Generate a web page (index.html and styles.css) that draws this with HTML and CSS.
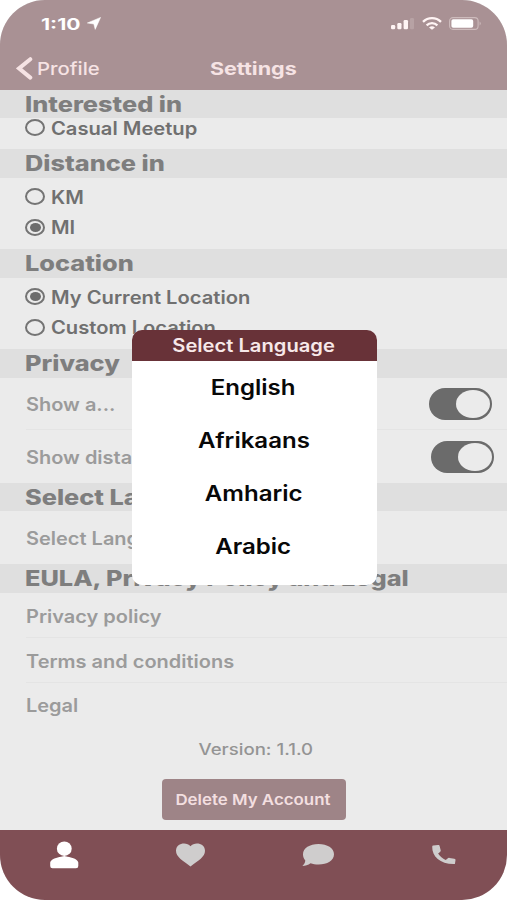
FILE: index.html
```html
<!DOCTYPE html>
<html lang="en">
<head>
<meta charset="utf-8">
<title>Settings</title>
<link rel="stylesheet" href="styles.css">
</head>
<body>
<div class="phone">
  <header class="top">
    <div class="status">
      <span class="t time">1:10</span>
      <svg class="nav-arrow" width="14" height="13" viewBox="0 0 14 13"><path d="M13.600 .4 8.200 12.400 6.800 7 .3 6z" fill="#fff" stroke="#fff" stroke-width=".5" stroke-linejoin="round"/></svg>
      <svg class="signal" width="24" height="13" viewBox="0 0 24 13"><g fill="#fff4f4"><rect x="0" y="8" width="4.200" height="4.3" rx="1.2"/><rect x="6.3" y="6" width="4.200" height="6.3" rx="1.2"/><rect x="12.6" y="3" width="4.400" height="9.3" rx="1.2"/></g><rect x="19" y="1" width="4" height="11.3" rx="1.2" fill="#b7a2a4"/></svg>
      <svg class="wifi" width="20" height="13" viewBox="0 0 20 13"><g fill="none" stroke="#fff4f4" stroke-width="2.3"><path d="M1 4.9C6-.1 14-.1 19 4.9"/><path d="M4.6 8.3C7.6 5.4 12.4 5.4 15.4 8.3"/></g><path d="M7 10.4Q10 8 13 10.4L10 12.8z" fill="#fff4f4"/></svg>
      <svg class="battery" width="33" height="13" viewBox="0 0 33 13"><rect x=".6" y=".6" width="28.5" height="11.8" rx="3.4" fill="none" stroke="#cdbbbc" stroke-width="1.1"/><rect x="2.4" y="2.2" width="21.8" height="8.6" rx="1.8" fill="#fff"/><path d="M30.6 4.5Q33 6.5 30.6 8.5z" fill="#cdbbbc"/></svg>
    </div>
    <div class="nav">
      <a class="back"><svg width="17" height="23" viewBox="0 0 17 23"><path d="M14.300 2.200 3 11.400 14.300 20.600" fill="none" stroke="#f6e3e4" stroke-width="4" stroke-linecap="round" stroke-linejoin="miter"/></svg><span class="t">Profile</span></a>
      <h1 class="t">Settings</h1>
    </div>
  </header>
  <main class="content">
    <h2 class="bar first"><span class="t">Interested in</span></h2>
    <div class="options single"><div class="option"><i class="radio"></i><span class="t">Casual Meetup</span></div></div>
    <h2 class="bar"><span class="t">Distance in</span></h2>
    <div class="options">
      <div class="option"><i class="radio"></i><span class="t">KM</span></div>
      <div class="option"><i class="radio on"></i><span class="t">MI</span></div>
    </div>
    <h2 class="bar"><span class="t">Location</span></h2>
    <div class="options">
      <div class="option"><i class="radio on"></i><span class="t">My Current Location</span></div>
      <div class="option"><i class="radio"></i><span class="t">Custom Location</span></div>
    </div>
    <h2 class="bar"><span class="t">Privacy</span></h2>
    <div class="row tall line"><span class="t">Show a...</span><i class="switch"></i></div>
    <div class="row tall shifted"><span class="t">Show distance</span><i class="switch"></i></div>
    <h2 class="bar"><span class="t">Select Language</span></h2>
    <div class="row tall"><span class="t">Select Language</span></div>
    <h2 class="bar"><span class="t">EULA, Privacy Policy and Legal</span></h2>
    <div class="row line"><span class="t">Privacy policy</span></div>
    <div class="row line"><span class="t">Terms and conditions</span></div>
    <div class="row last"><span class="t">Legal</span></div>
    <div class="version"><span class="t">Version: 1.1.0</span></div>
    <button class="delete"><span class="t">Delete My Account</span></button>
  </main>
  <footer class="tabs">
    <svg width="30" height="30" viewBox="0 0 30 30"><ellipse cx="15.3" cy="8.700" rx="7.4" ry="7.2" fill="#fff"/><path d="M1.200 22.500C2 19 8 17.500 12 16.800L15.300 16 18.600 16.800C22.600 17.500 28.600 19 29.300 22.500V26Q29.300 28.300 27 28.300H3.500Q1.200 28.300 1.200 26z" fill="#fff"/></svg>
    <svg width="30" height="30" viewBox="0 0 30 30"><path d="M15.500 26.500C7.500 20.500 1 17 1 10.800 1 3 11.500 1.500 15.500 6.300 19.500 1.500 30 3 30 10.800 30 17 23.500 20.500 15.500 26.500z" fill="#cfcdcd"/></svg>
    <svg width="34" height="30" viewBox="0 0 34 30"><path d="M17.500 4C26.300 4 33 8.200 33 14.300S26.300 24.600 17.500 24.600C14.500 24.600 11.800 24.100 9.500 23.300 7.200 25.100 4.200 25.900 1.400 25.900 3 24.400 4.200 22.600 4.300 20.500 2.700 18.700 2 16.600 2 14.300 2 8.200 8.700 4 17.500 4z" fill="#cfcdcd"/></svg>
    <svg width="26" height="30" viewBox="0 0 26 30"><path d="M2.200 5.600 7 5C8 4.900 8.400 5.300 8.600 6L9.700 10.200C9.900 11 9.600 11.400 9 11.900L7.100 13.500C9 16.500 11.500 18.500 14.700 20L16.600 18.400C17.200 17.900 17.700 17.700 18.500 17.900L23.300 18.800C24.200 19 24.600 19.400 24.500 20.200L23.900 24C9.500 24.500 1 16.500 1.200 6.700Q1.200 5.700 2.200 5.600z" fill="#cfcdcd"/></svg>
  </footer>
  <div class="modal">
    <div class="modal-title"><span class="t">Select Language</span></div>
    <ul>
      <li><span class="t">English</span></li>
      <li><span class="t">Afrikaans</span></li>
      <li><span class="t">Amharic</span></li>
      <li><span class="t">Arabic</span></li>
    </ul>
  </div>
</div>
</body>
</html>
```
FILE: styles.css
```css
* { box-sizing: border-box; }
body { margin: 0; background: #fff; font-family: Inter, "Liberation Sans", sans-serif; }
h1, h2, ul { margin: 0; padding: 0; list-style: none; }
.phone { position: relative; width: 507px; height: 900px; border-radius: 45px; overflow: hidden; background: #ebebeb; display: flex; flex-direction: column; }
.t { display: inline-block; white-space: nowrap; transform: scaleX(1.11); transform-origin: left center; }

.top { height: 90px; background: #a99194; }
.status { height: 47px; display: flex; align-items: center; padding-left: 41px; color: #fff; }
.time { width: 46px; font-size: 16px; font-weight: 700; transform: scaleX(1.32); }
.signal { margin-left: 290px; }
.wifi { margin-left: 7px; }
.battery { margin-left: 7px; }
.nav { height: 42px; display: grid; grid-template-columns: 1fr auto 1fr; align-items: center; color: #f6e3e4; }
.back { display: flex; align-items: center; gap: 4px; padding-left: 16px; font-size: 17.500px; font-weight: 500; }
.back .t { transform: scaleX(1.16); }
.nav h1 { font-size: 17.500px; font-weight: 700; transform: scaleX(1.23); transform-origin: center; }

.content { height: 739.500px; display: flex; flex-direction: column; color: #707070; }
.bar { flex: none; height: 28.500px; padding-left: 25px; background: #dfdfdf; color: #7e7e7e; font-size: 21px; line-height: 30px; font-weight: 800; }
.bar .t { transform: scaleX(1.205); }
.bar.first { height: 28px; }
.options { flex: none; height: 71.500px; padding-top: 4px; }
.options.single { height: 31px; padding: 0; }
.option { height: 30.500px; display: flex; align-items: center; gap: 6px; padding-left: 25px; font-size: 18px; font-weight: 600; }
.option .t { padding-top: 1px; transform: scaleX(1.12); }
.single .option { height: 19px; }
.radio { width: 20px; height: 17px; border: 2px solid #747474; border-radius: 50%; display: grid; place-items: center; }
.radio.on::after { content: ""; width: 11px; height: 9px; border-radius: 50%; background: #6c6c6c; }
.row { flex: none; height: 45px; margin-left: 26px; padding-top: 3px; display: flex; align-items: center; justify-content: space-between; font-size: 18px; font-weight: 600; color: #9b9b9b; }
.row.tall { height: 52.700px; padding-top: 2px; }
.row.shifted { padding-top: 1px; }
.row.last { padding-top: 1px; }
.row.line { border-bottom: 1px solid #e4e4e4; }
.switch { width: 63px; height: 32px; margin-right: 15px; border-radius: 16px; background: #6b6b6b; display: flex; align-items: center; justify-content: flex-end; padding-right: 2px; }
.switch::after { content: ""; width: 34px; height: 28px; border-radius: 50%; background: #ebebeb; }
.shifted .switch { margin-right: 13px; }
.version { height: 41px; padding: 2px 0 0 5px; display: flex; align-items: center; justify-content: center; font-size: 15.500px; font-weight: 500; color: #949494; }
.version .t, .delete .t, .modal .t { transform-origin: center; }
.version .t { transform: scaleX(1.2); }
.delete { align-self: center; width: 184px; height: 41px; margin-top: 10px; border: 0; border-radius: 4px; background: #9e8487; color: #f3dfe0; font: 600 15px Inter, sans-serif; padding: 0 1px 0 0; display: flex; align-items: center; justify-content: center; }
.delete .t { transform: scaleX(1.125); }

.tabs { height: 70.500px; background: #804f55; display: flex; justify-content: space-between; padding: 10.500px 50px 0 49px; }
.modal { position: absolute; left: 131.500px; top: 330px; width: 245px; height: 255px; border-radius: 10px; background: #fff; overflow: hidden; text-align: center; }
.modal-title { height: 31px; line-height: 32px; background: #683238; color: #f7e8e9; font-size: 18px; font-weight: 600; }
.modal-title .t { transform: scaleX(1.12); }
.modal li { height: 53px; line-height: 53px; padding-right: 1px; color: #080808; font-size: 21px; font-weight: 600; }
.modal li .t { transform: scaleX(1.145); }
```
